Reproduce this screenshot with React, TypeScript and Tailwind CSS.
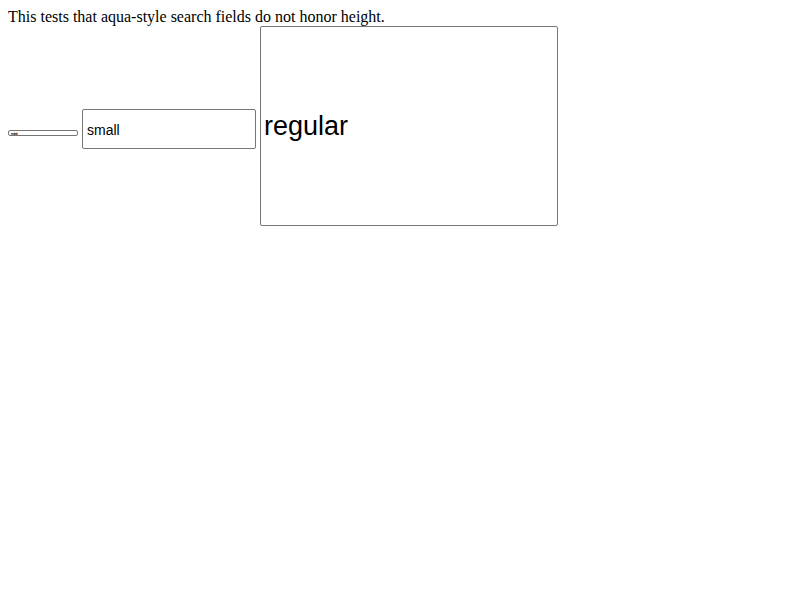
export default function App() {
  return (
    <div className="p-2 font-['Liberation_Serif',serif] text-base leading-[18px] text-black">
      <p>This tests that aqua-style search fields do not honor height.</p>
      <div className="flex items-center gap-1">
        <div className="mt-[14px] flex h-[6px] w-[70px] items-center rounded-[2px] border border-[#767676] pl-[2px] font-['Liberation_Sans',sans-serif] text-[4px] leading-[3px]">
          <span className="font-bold tracking-[-0.5px]">mini</span>
        </div>
        <div className="mt-[6px] flex h-[40px] w-[174px] items-center rounded-[2px] border border-[#767676] pl-1 pt-[2px] font-['Liberation_Sans',sans-serif] text-[14px]">
          small
        </div>
        <div className="flex h-[200px] w-[298px] items-center rounded-[2px] border border-[#767676] pl-[3px] font-['Liberation_Sans',sans-serif] text-[27px]">
          regular
        </div>
      </div>
    </div>
  );
}
